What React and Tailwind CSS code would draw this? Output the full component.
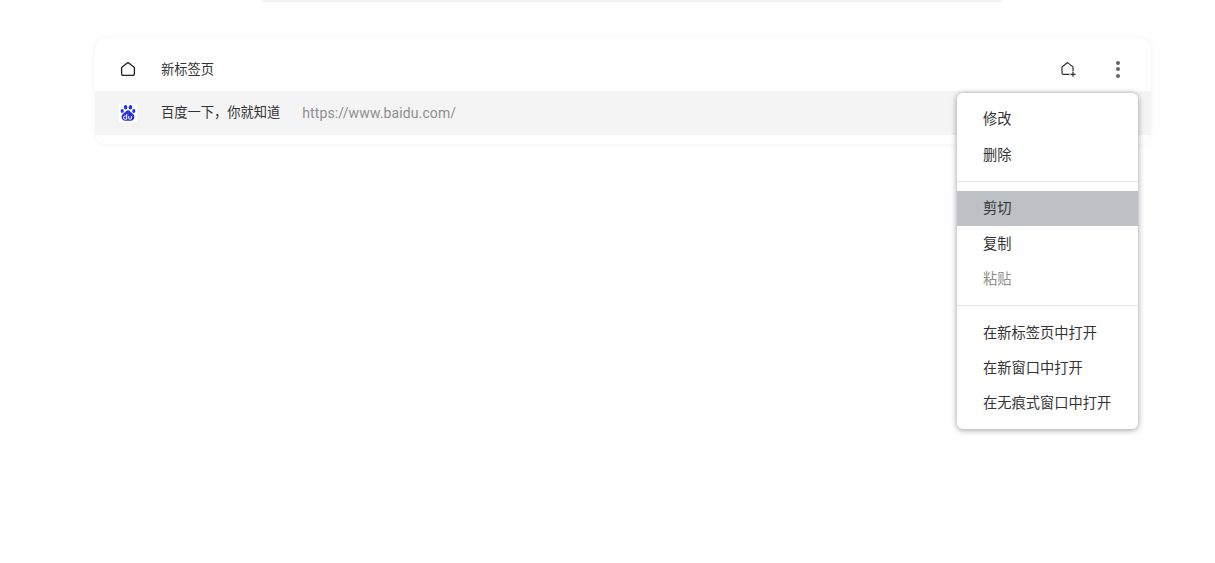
const cjk = 'font-["Noto_Sans_CJK_SC","Liberation_Sans",sans-serif]'

function HomeIcon() {
  return (
    <svg width="16" height="16" viewBox="0 0 16 16" fill="none" stroke="#1d2033" strokeWidth="1.3" strokeLinejoin="round">
      <path d="M8 1.6 14.4 6.400V12.400a1.900 1.900 0 0 1-1.900 1.900H3.500a1.900 1.900 0 0 1-1.900-1.900V6.400Z" />
    </svg>
  )
}

function AddBookmarkIcon() {
  return (
    <svg width="16" height="16" viewBox="0 0 16 16" fill="none" stroke="#2b2d3a" strokeWidth="1.2" strokeLinejoin="round">
      <path d="M9.500 13.400H3.600a1.600 1.600 0 0 1-1.600-1.600V5.900L7.600 1.600l5.400 4.300v4.300" />
      <path d="M13 10.800v5M10.500 13.400h5" />
    </svg>
  )
}

function BaiduIcon() {
  return (
    <svg width="18" height="18" viewBox="0 0 18 18">
      <rect width="18" height="18" fill="#ffffff" />
      <g fill="#2932e1">
        <ellipse cx="6.600" cy="3.300" rx="1.700" ry="2.200" />
        <ellipse cx="11.400" cy="3.300" rx="1.700" ry="2.200" />
        <ellipse cx="3.200" cy="7" rx="1.600" ry="2.100" />
        <ellipse cx="14.800" cy="7" rx="1.600" ry="2.100" />
        <path d="M9 6.200c-1.700 0-2.400 1.500-3.600 2.500C4.100 9.700 2.600 10.800 2.600 13c0 2.200 1.600 3.800 3.600 3.800h5.600c2 0 3.600-1.600 3.600-3.800 0-2.200-1.500-3.300-2.800-4.300C11.400 7.700 10.700 6.200 9 6.200Z" />
      </g>
      <g fill="none" stroke="#ffffff" strokeWidth="1">
        <path d="M7.700 10v5.200H6.100a1.500 1.500 0 0 1 0-3.200h1.600" />
        <path d="M9.700 12v2.100a1 1 0 0 0 1 1h.7a1 1 0 0 0 1-1V12" />
      </g>
    </svg>
  )
}

function MenuItem({ children, active, disabled, lift }) {
  return (
    <div className={`h-[35px] pl-[26px] flex items-center text-[14.25px] ${lift ? 'pb-[4px]' : 'pb-[2px]'} ${active ? 'bg-[#bdc1c6]' : ''} ${disabled ? 'text-[#8f8f8f]' : 'text-[#333333]'}`}>
      {children}
    </div>
  )
}

export default function App() {
  return (
    <div className={`relative w-[1215px] h-[563px] overflow-hidden bg-white ${cjk}`}>
      <div className="ml-[262px] w-[740px] h-[2px] rounded-b bg-[#f1f1f1]" />

      {/* bookmark list */}
      <div className="ml-[95px] mt-[36px] w-[1056px] py-[9px] rounded-xl bg-white shadow-[0_0_6px_rgba(0,0,0,0.06)]">
        <div className="h-[44px] flex items-center text-[13.25px] text-[#333333]">
          <div className="w-[66px] flex justify-center"><HomeIcon /></div>
          <span className="pb-[1px]">新标签页</span>
          <div className="ml-auto flex items-center">
            <div className="w-[50px] flex justify-center"><AddBookmarkIcon /></div>
            <div className="w-[50px] mr-[8px] flex flex-col items-center gap-[2.5px]">
              <span className="w-[4px] h-[4px] rounded-full bg-[#666666]" />
              <span className="w-[4px] h-[4px] rounded-full bg-[#666666]" />
              <span className="w-[4px] h-[4px] rounded-full bg-[#666666]" />
            </div>
          </div>
        </div>
        <div className="h-[44px] flex items-center bg-[#f4f4f4] text-[13.25px] text-[#333333]">
          <div className="w-[66px] flex justify-center"><BaiduIcon /></div>
          <span className="pb-[2px]">百度一下，你就知道</span>
          <span className='ml-[22px] font-["Roboto",sans-serif] text-sm text-[#8f8f8f] tracking-[0.12px]'>https://www.baidu.com/</span>
        </div>
      </div>

      {/* context menu */}
      <div className="absolute left-[957px] top-[93px] w-[181px] pt-[9px] pb-[8px] rounded-md bg-white shadow-[0_1px_6px_rgba(0,0,0,0.4)]">
        <MenuItem lift>修改</MenuItem>
        <MenuItem>删除</MenuItem>
        <div className="my-[9px] h-px bg-[#e4e4e4]" />
        <MenuItem lift active>剪切</MenuItem>
        <MenuItem>复制</MenuItem>
        <MenuItem disabled>粘贴</MenuItem>
        <div className="mt-[9px] mb-[10px] h-px bg-[#e4e4e4]" />
        <MenuItem lift>在新标签页中打开</MenuItem>
        <MenuItem lift>在新窗口中打开</MenuItem>
        <MenuItem lift>在无痕式窗口中打开</MenuItem>
      </div>
    </div>
  )
}
